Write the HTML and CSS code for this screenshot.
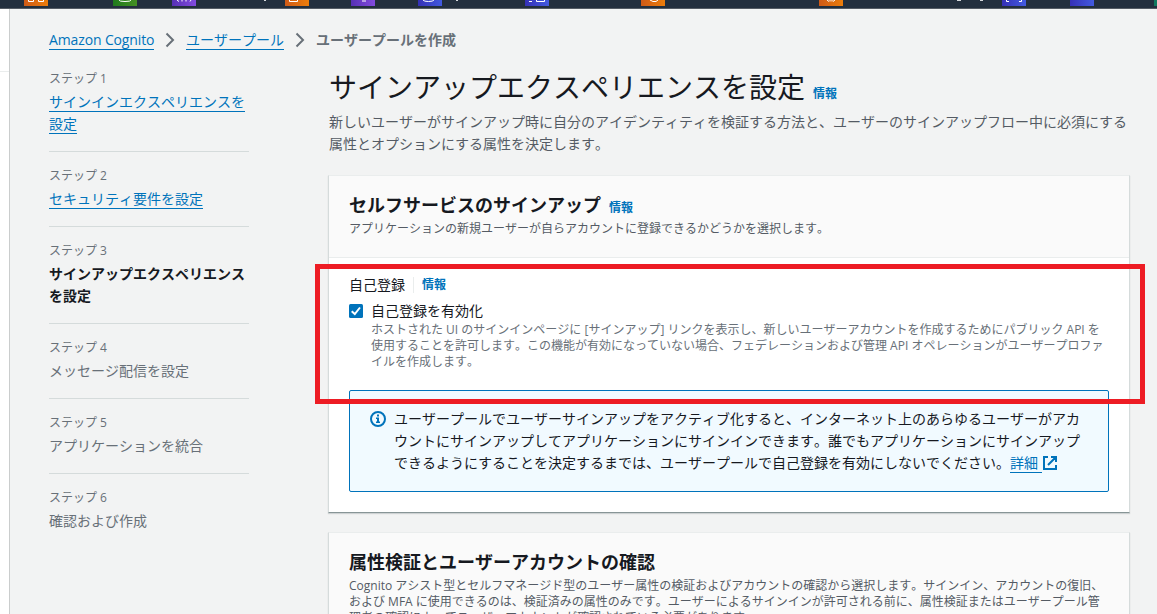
FILE: index.html
```html
<!DOCTYPE html>
<html lang="ja">
<head>
<meta charset="utf-8">
<title>ユーザープールを作成</title>
<link rel="stylesheet" href="styles.css">
</head>
<body>
<div class="page">
<header class="topbar">
<svg width="1157" height="9" viewBox="0 0 1157 9">
<defs>
<linearGradient id="o"><stop offset="0" stop-color="#cf5a17"/><stop offset="1" stop-color="#ec7d0b"/></linearGradient>
<linearGradient id="g"><stop offset="0" stop-color="#1f7a1c"/><stop offset="1" stop-color="#459024"/></linearGradient>
<linearGradient id="p"><stop offset="0" stop-color="#5630b4"/><stop offset="1" stop-color="#834bdf"/></linearGradient>
<linearGradient id="b"><stop offset="0" stop-color="#3530b6"/><stop offset="1" stop-color="#425ae0"/></linearGradient>
</defs>
<rect x="24" width="24" height="6" fill="url(#o)"/>
<rect x="113" width="24" height="6" fill="url(#g)"/>
<rect x="172" width="24" height="6" fill="url(#p)"/>
<rect x="285" width="24" height="6" fill="url(#o)"/>
<rect x="351" width="24" height="6" fill="url(#p)"/>
<rect x="418" width="24" height="6" fill="url(#b)"/>
<rect x="525" width="24" height="6" fill="url(#b)"/>
<rect x="641" width="24" height="6" fill="url(#o)"/>
<rect x="819" width="24" height="6" fill="url(#o)"/>
<rect x="1002" width="24" height="6" fill="url(#b)"/>
<rect x="1070" width="24" height="6" fill="url(#b)"/>
<rect x="1154" width="3" height="6" fill="#11795f"/>
<g fill="none" stroke="#fff" stroke-width="1">
<path d="M28.500 0V1.500H33.500V0M38.500 0V1.500H43.500V0M119 0Q119 1.500 125 1.500T131 0M177 0L179 1.500M182 1.500V0M186 0V1.500M190 1.500L191 0M289.500 0V1.500H297.500V0M362 1H366M423 0Q424 1.500 428.500 1.500T434 0M529 1.500H532M536.500 0V1.500H544.500V0M650 0L653 1.500H656L658 0M827 0L829 1.500M830 0V1.500M832 0V1.500M835 0L833 1.500M1006.500 0V1.500H1009M1019 1.500H1021.500V0"/>
</g>
<path d="M264 0h2v1h-2zM456 0h2v1h-2zM957 0h4v1h-4zM980 0h3v1h-3z" fill="#d5d8dc"/>
</svg>
</header>
<div class="body">
<aside class="rail"><div class="rail-line"></div></aside>
<div class="content">
<nav class="crumbs">
<a class="link crumb-first">Amazon Cognito</a>
<svg class="chev" width="10" height="16" viewBox="0 0 10 16"><path d="M1.500 1.500L8 8L1.500 14.500"/></svg>
<a class="link">ユーザープール</a>
<svg class="chev" width="10" height="16" viewBox="0 0 10 16"><path d="M1.500 1.500L8 8L1.500 14.500"/></svg>
<span class="current">ユーザープールを作成</span>
</nav>
<div class="columns">
<ol class="steps">
<li class="step"><small>ステップ 1</small><div><a class="link">サインインエクスペリエンスを<br>設定</a></div></li>
<li class="step"><small>ステップ 2</small><div><a class="link">セキュリティ要件を設定</a></div></li>
<li class="step active"><small>ステップ 3</small><div>サインアップエクスペリエンス<br>を設定</div></li>
<li class="step"><small>ステップ 4</small><div>メッセージ配信を設定</div></li>
<li class="step"><small>ステップ 5</small><div>アプリケーションを統合</div></li>
<li class="step"><small>ステップ 6</small><div>確認および作成</div></li>
</ol>
<main class="main">
<h1>サインアップエクスペリエンスを設定<a class="info">情報</a></h1>
<p class="lead">新しいユーザーがサインアップ時に自分のアイデンティティを検証する方法と、ユーザーのサインアップフロー中に必須にする<br>属性とオプションにする属性を決定します。</p>
<section class="card">
<div class="card-head">
<h2>セルフサービスのサインアップ<a class="info">情報</a></h2>
<p>アプリケーションの新規ユーザーが自らアカウントに登録できるかどうかを選択します。</p>
</div>
<div class="card-body">
<div class="field-label"><span>自己登録</span><a class="info">情報</a></div>
<div class="check-row">
<svg width="14" height="14" viewBox="0 0 14 14"><rect width="14" height="14" rx="1.500" fill="#0073bb"/><path d="M2.700 7.200L5.800 10L11 3.500" fill="none" stroke="#fff" stroke-width="2"/></svg>
<div>
<div class="check-label">自己登録を有効化</div>
<p class="hint">ホストされた UI のサインインページに [サインアップ] リンクを表示し、新しいユーザーアカウントを作成するためにパブリック API を<br>使用することを許可します。この機能が有効になっていない場合、フェデレーションおよび管理 API オペレーションがユーザープロファ<br>イルを作成します。</p>
</div>
</div>
<div class="alert">
<svg width="16" height="16" viewBox="0 0 16 16"><circle cx="8" cy="8" r="7" fill="none" stroke="#0073bb" stroke-width="2"/><path d="M7 3.500h2v2H7zM6 6.500h3v4h1v1.500H6v-1.500h1V8H6z" fill="#0073bb"/></svg>
<p>ユーザープールでユーザーサインアップをアクティブ化すると、インターネット上のあらゆるユーザーがアカ<br>ウントにサインアップしてアプリケーションにサインインできます。誰でもアプリケーションにサインアップ<br>できるようにすることを決定するまでは、ユーザープールで自己登録を有効にしないでください。<a class="link more">詳細</a><svg class="ext" width="14" height="14" viewBox="0 0 14 14"><path d="M5 1H1V13H13V9M8 1H13V6M13 1L5 9" fill="none" stroke="#0073bb" stroke-width="2"/></svg></p>
</div>
</div>
</section>
<section class="card second">
<div class="card-head">
<h2>属性検証とユーザーアカウントの確認</h2>
<p>Cognito アシスト型とセルフマネージド型のユーザー属性の検証およびアカウントの確認から選択します。サインイン、アカウントの復旧、<br>および MFA に使用できるのは、検証済みの属性のみです。ユーザーによるサインインが許可される前に、属性検証またはユーザープール管<br>理者の確認によってユーザーアカウントが確認されている必要があります。</p>
</div>
</section>
</main>
</div>
</div>
</div>
<div class="highlight"></div>
</div>
</body>
</html>
```
FILE: styles.css
```css
* { box-sizing: border-box; }
body { margin: 0; overflow: hidden; }
.page { position: relative; width: 1157px; height: 614px; overflow: hidden; display: flex; flex-direction: column; background: #f2f3f3; color: #16191f; font: 14px/22px "Open Sans", "Noto Sans CJK JP", sans-serif; white-space: nowrap; font-kerning: none; }
h1, h2, p, ol { margin: 0; padding: 0; font-weight: 400; }
.topbar { height: 9px; flex: none; background: #232f3e; border-bottom: 1px solid #545b64; }
.topbar svg { display: block; }
.body { flex: 1; min-height: 0; display: flex; }
.rail { width: 10px; flex: none; background: #fff; border-right: 1px solid #cacdcd; }
.rail-line { height: 63px; border-bottom: 1px solid #eaeded; }
.content { flex: 1; padding: 20px 0 0 39px; }
.link { color: #0073bb; border-bottom: 1px solid #0073bb; }
.crumbs { display: flex; align-items: flex-start; height: 22px; }
.crumbs .link { height: 21px; line-height: 22px; }
.crumb-first { width: 105px; letter-spacing: -0.13px; }
.chev { margin: 3px 11px 0; fill: none; stroke: #687078; stroke-width: 2; }
.current { color: #687078; font-weight: 700; }
.columns { display: flex; gap: 79px; }
.steps { width: 200px; flex: none; list-style: none; padding-top: 16px; color: #687078; }
.step { border-bottom: 1px solid #d5dbdb; padding-bottom: 16px; margin-bottom: 12px; }
.step:last-child { border: 0; }
.step small { display: block; font-size: 12px; line-height: 23px; margin-bottom: 1px; }
.active div { color: #16191f; font-weight: 700; }
.main { width: 802px; padding-top: 18px; }
h1 { font-size: 28px; line-height: 36px; padding-left: 1px; }
.info { color: #0073bb; font-size: 12px; line-height: 12px; font-weight: 700; margin-left: 8px; }
.lead { padding: 6px 0 0 1px; color: #545b64; }
.card { width: 802px; margin-top: 20px; background: #fff; border: 1px solid #d5dbdb; border-top-color: #eaeded; border-bottom: 1px solid #879596; box-shadow: 0 1px 1px rgba(0,28,36,.15); height: 338px; }
.card-head { height: 82px; padding: 18px 20px 0; background: #fafafa; border-bottom: 1px solid #eaeded; }
h2 { font-size: 18px; line-height: 22px; font-weight: 700; }
.card-head p { font-size: 12px; line-height: 16px; color: #545b64; padding-top: 5px; }
.card-body { padding: 16px 20px 0; }
.field-label { display: flex; line-height: 22px; }
.field-label .info { border-left: 1px solid #eaeded; padding-left: 8px; line-height: 16px; height: 16px; margin-top: 3px; }
.check-row { display: flex; gap: 8px; padding-top: 4px; }
.check-row svg { margin-top: 4px; }
.hint { font-size: 12px; line-height: 16px; color: #687078; }
.alert { display: flex; gap: 8px; height: 102px; margin-top: 20px; padding: 17px 20px; background: #f1faff; border: 1px solid #0073bb; border-radius: 2px; }
.alert > svg { margin-top: 3px; flex: none; }
.more { padding-right: 4px; }
.ext { vertical-align: -2px; margin-left: 1px; }
.second { margin-top: 19px; height: 200px; }
.second .card-head { height: 120px; }
.highlight { position: absolute; left: 315px; top: 264px; width: 830px; height: 140px; border: 5px solid #ed1c24; }
```
